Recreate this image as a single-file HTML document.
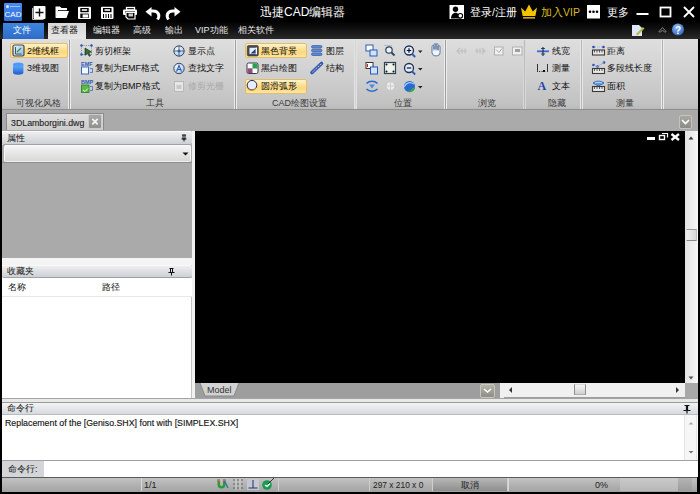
<!DOCTYPE html>
<html><head><meta charset="utf-8">
<style>
*{margin:0;padding:0;box-sizing:border-box}
html,body{width:700px;height:494px;overflow:hidden;background:#000;font-family:"Liberation Sans",sans-serif;font-size:11px;color:#222}
.a{position:absolute}
svg{position:absolute;overflow:visible}
.t{position:absolute;white-space:nowrap;line-height:12px}
.lat{-webkit-text-stroke:0.15px #222}
#title{left:0;top:0;width:700px;height:22px;background:#000}
#menu{left:0;top:22px;width:700px;height:17px;background:linear-gradient(#030303,#0c0c0c 30%,#2a2a2a)}
#ribbon{left:2px;top:39px;width:696px;height:71px;background:linear-gradient(#dedede,#d0d0d0 50%,#c2c2c2 92%,#b8b8b8)}
#tabstrip{left:2px;top:109px;width:696px;height:22px;background:#aaaaaa;border-top:1px solid #8e8e8e}
#left{left:2px;top:131px;width:190px;height:267px;background:#fff;border-right:1px solid #c4c4c4}
#split{left:192px;top:131px;width:3px;height:267px;background:#f2f2f2}
#draw{left:195px;top:131px;width:490px;height:252px;background:#000}
#vscroll{left:685px;top:131px;width:13px;height:252px;background:linear-gradient(90deg,#e4e4e4,#f6f6f6)}
#modelbar{left:195px;top:383px;width:490px;height:15px;background:#9e9e9e}
#corner{left:685px;top:383px;width:13px;height:15px;background:#a8a8a8}
#gap{left:2px;top:398px;width:696px;height:4px;background:#e6e9e6;border-top:1px solid #a4a4a4}
#cmdhdr{left:2px;top:402px;width:696px;height:13px;background:linear-gradient(#f2f3f4,#d6d9de);border-top:1px solid #9a9a9a;border-bottom:1px solid #b8bcc2}
#cmdtext{left:2px;top:415px;width:696px;height:46px;background:#fff;border-bottom:1px solid #a0a0a0}
#cmdin{left:2px;top:461px;width:696px;height:16px;background:#fff}
#status{left:2px;top:477px;width:695px;height:15px;background:linear-gradient(#c2c2c2,#a2a2a2);border-top:1px solid #5a5a5a}
.sep{position:absolute;top:40px;width:3px;height:69px;border-left:1px solid #ececec;border-right:1px solid #ececec;background:#9e9e9e}
.lbl{position:absolute;top:97px;font-size:9px;color:#3a3a3a;line-height:12px;white-space:nowrap}
.rb{position:absolute;font-size:9px;color:#111;line-height:12px;white-space:nowrap}
.hl{position:absolute;background:linear-gradient(#fff3c8,#fdd77a 60%,#fbe6a8);border:1px solid #e3bd6a;border-radius:2px}
.mn{position:absolute;top:24px;font-size:9px;color:#e8e8e8;line-height:12px;white-space:nowrap}
.hdr{position:absolute;background:linear-gradient(#eeeeef,#cdd0d5);border-top:1px solid #f8f8f8;border-bottom:1px solid #9ea2a8;border-radius:2px}
.nocjk .cj{letter-spacing:0.22em;-webkit-text-stroke:0.35px currentColor}
</style></head><body>
<div class="a" id="title"></div>
<div class="a" id="menu"></div>
<div class="a" id="ribbon"></div>
<div class="a" id="tabstrip"></div>
<div class="a" id="left"></div>
<div class="a" id="split"></div>
<div class="a" id="draw"></div>
<div class="a" id="vscroll"></div>
<div class="a" id="modelbar"></div>
<div class="a" id="corner"></div>
<div class="a" id="gap"></div>
<div class="a" id="cmdhdr"></div>
<div class="a" id="cmdtext"></div>
<div class="a" id="cmdin"></div>
<div class="a" id="status"></div>

<!-- ===== TITLE BAR ===== -->
<div class="a" style="left:4px;top:3px;width:18px;height:18px;background:linear-gradient(#4a8cf0,#3270d8);border-radius:1px"></div>
<div class="t" style="left:4px;top:10px;width:18px;text-align:center;font-size:8px;line-height:9px;color:#fff">CAD</div>
<div class="a" style="left:6px;top:5px;width:3px;height:3px;border-radius:50%;background:#dce8ff"></div>
<div class="a" style="left:10px;top:6px;width:10px;height:1px;background:#9cc0f8"></div>

<svg style="left:0;top:0" width="700" height="22">
 <!-- new -->
 <path d="M32.5 8v11.5h11" fill="none" stroke="#bbb" stroke-width="1"/>
 <rect x="33.5" y="6" width="12" height="13" rx="1" fill="#fff"/>
 <path d="M39.5 8.5v8M35.5 12.5h8" stroke="#111" stroke-width="1.4"/>
 <!-- open -->
 <path d="M55.5 6.5h4.5l1.5 1.5h5.5v3H58.5l-3 6.5z" fill="#fff"/>
 <path d="M57.5 11h11.5l-2.5 7H55.5z" fill="#fff"/>
 <path d="M58 10.5h9" stroke="#000" stroke-width="0.8"/>
 <!-- save -->
 <rect x="78" y="6.8" width="13" height="12.2" rx="1" fill="#fff"/>
 <rect x="80.3" y="8" width="8.4" height="4.2" fill="#000"/>
 <rect x="81.8" y="9.2" width="5.4" height="1.6" fill="#fff"/>
 <rect x="80.3" y="13.6" width="8.4" height="4.4" fill="#000"/>
 <rect x="82.6" y="14.4" width="5.4" height="3.2" fill="#fff"/>
 <!-- save as -->
 <rect x="101" y="6.8" width="12.5" height="12.2" rx="1" fill="#fff"/>
 <rect x="103" y="8" width="8.5" height="4.2" fill="#000"/>
 <rect x="104.5" y="9.2" width="5.5" height="1.6" fill="#fff"/>
 <path d="M103.5 14v4M106 14v4M108.5 14v4M111 14v4" stroke="#000" stroke-width="1"/>
 <!-- print -->
 <rect x="126.5" y="7.5" width="8" height="2.5" fill="none" stroke="#fff" stroke-width="1.3"/>
 <rect x="123" y="9.5" width="14" height="5.5" rx="1" fill="#fff"/>
 <rect x="125" y="11.5" width="10" height="2" fill="#000"/>
 <path d="M126 12.5h9v6.5h-7l-2-2z" fill="#000" stroke="#fff" stroke-width="1.2"/>
 <rect x="128.5" y="13.5" width="4.5" height="3" fill="#ccc"/>
 <!-- undo -->
 <path d="M157.5 19.5c2.5-3.5 1.5-8.5-4.5-8.5h-2" fill="none" stroke="#fff" stroke-width="3"/>
 <path d="M145.5 11.8l6-4.8v9.6z" fill="#fff"/>
 <!-- redo -->
 <path d="M168.5 19.5c-2.5-3.5-1.5-8.5 4.5-8.5h2" fill="none" stroke="#fff" stroke-width="3"/>
 <path d="M180.5 11.8l-6-4.8v9.6z" fill="#fff"/>
 <!-- user -->
 <rect x="449.5" y="5" width="14.5" height="14" fill="#fff"/>
 <circle cx="455.5" cy="9.3" r="2.7" fill="#000"/>
 <path d="M451 18.5c0-3.5 2-5.8 4.5-5.8s4.5 2.3 4.5 5.8z" fill="#000"/>
 <circle cx="460.3" cy="15.8" r="2.3" fill="#fff" stroke="#000" stroke-width="1.1"/>
 <!-- crown -->
 <path d="M521 7.5l4.2 4 3.8-7 3.8 7 4.2-4-1.6 8.5h-12.8z" fill="#f3c300"/>
 <rect x="523" y="17" width="12" height="1.6" fill="#d4a600"/>
 <!-- more -->
 <rect x="587" y="5" width="13" height="13.5" fill="#fff"/>
 <circle cx="590" cy="11.8" r="1.3" fill="#000"/><circle cx="593.5" cy="11.8" r="1.3" fill="#000"/><circle cx="597" cy="11.8" r="1.3" fill="#000"/>
 <!-- min max close -->
 <rect x="636.5" y="13" width="12" height="2" fill="#fff"/>
 <rect x="660.5" y="7.5" width="10" height="9" fill="none" stroke="#fff" stroke-width="1.8"/>
 <path d="M684 7l10 10M694 7l-10 10" stroke="#fff" stroke-width="1.8"/>
</svg>
<div class="t" style="left:260px;top:5px;font-size:12px;line-height:15px;color:#fff">迅捷CAD编辑器</div>
<div class="t" style="left:470px;top:6px;font-size:10.5px;color:#fff">登录/注册</div>
<div class="t" style="left:541px;top:6px;font-size:10.5px;color:#d9bc22">加入VIP</div>
<div class="t" style="left:607px;top:6px;font-size:10.5px;color:#fff">更多</div>

<!-- ===== MENU ROW ===== -->
<div class="a" style="left:3px;top:23px;width:41px;height:16px;background:linear-gradient(#3e86e0,#2d6cc8)"></div>
<div class="mn" style="left:13px;top:24px;color:#fff">文件</div>
<div class="a" style="left:48px;top:23px;width:38px;height:16px;background:linear-gradient(#d8d8d8,#e6e6e6)"></div>
<div class="mn" style="left:51px;color:#111">查看器</div>
<div class="mn" style="left:93px">编辑器</div>
<div class="mn" style="left:133px">高级</div>
<div class="mn" style="left:165px">输出</div>
<div class="mn" style="left:195px">VIP功能</div>
<div class="mn" style="left:238px">相关软件</div>
<svg style="left:0;top:22px" width="700" height="17">
 <path d="M632 3h7l3 3v8h-10z" fill="#dfe8f5"/>
 <path d="M636 12l7-7 1.5 1.5-7 7z" fill="#b8b84a"/>
 <path d="M659 9.5l3.5-4 3.5 4v0.5h-1.6l-1.9-2-1.9 2h-1.6z" fill="none" stroke="#8c8c8c" stroke-width="0.9"/>
 <defs><radialGradient id="qg" cx="0.4" cy="0.3" r="0.8"><stop offset="0" stop-color="#8ab8f0"/><stop offset="1" stop-color="#2a62c0"/></radialGradient></defs>
 <circle cx="678" cy="7.5" r="6" fill="url(#qg)"/>
 <text x="678" y="11.5" font-size="10" font-weight="bold" fill="#fff" text-anchor="middle" font-family="Liberation Sans">?</text>
</svg>

<!-- ===== RIBBON ===== -->
<div class="sep" style="left:68px"></div>
<div class="sep" style="left:234px"></div>
<div class="sep" style="left:354px;background:#d4d4d4;border-color:#e2e2e2"></div>
<div class="sep" style="left:444px"></div>
<div class="sep" style="left:523px;background:#bcbcbc;border-color:#d8d8d8"></div>
<div class="sep" style="left:580px;background:#b8b8b8;border-color:#e6e6e6"></div>
<div class="sep" style="left:661px;background:#b0b0b0"></div>

<!-- group 1 -->
<div class="hl" style="left:10px;top:43px;width:58px;height:15px"></div>
<div class="rb" style="left:27px;top:45px">2维线框</div>
<div class="rb" style="left:27px;top:62px">3维视图</div>
<div class="lbl" style="left:16px">可视化风格</div>
<!-- group 2 -->
<div class="rb" style="left:95px;top:45px">剪切框架</div>
<div class="rb" style="left:95px;top:62px">复制为EMF格式</div>
<div class="rb" style="left:95px;top:79.5px">复制为BMP格式</div>
<div class="rb" style="left:188px;top:45px">显示点</div>
<div class="rb" style="left:188px;top:62px">查找文字</div>
<div class="rb" style="left:188px;top:79.5px;color:#aaa">修剪光栅</div>
<div class="lbl" style="left:146px">工具</div>
<!-- group 3 -->
<div class="hl" style="left:245px;top:43px;width:62px;height:15px"></div>
<div class="hl" style="left:245px;top:79px;width:62px;height:15px"></div>
<div class="rb" style="left:261px;top:45px">黑色背景</div>
<div class="rb" style="left:261px;top:62px">黑白绘图</div>
<div class="rb" style="left:261px;top:79.5px">圆滑弧形</div>
<div class="rb" style="left:326px;top:45px">图层</div>
<div class="rb" style="left:326px;top:62px">结构</div>
<div class="lbl" style="left:272px">CAD绘图设置</div>
<!-- group 4 -->
<div class="lbl" style="left:394px">位置</div>
<div class="lbl" style="left:478px">浏览</div>
<div class="rb" style="left:552px;top:45px">线宽</div>
<div class="rb" style="left:552px;top:62px">测量</div>
<div class="rb" style="left:552px;top:79.5px">文本</div>
<div class="lbl" style="left:548px">隐藏</div>
<div class="rb" style="left:607px;top:45px">距离</div>
<div class="rb" style="left:607px;top:62px">多段线长度</div>
<div class="rb" style="left:607px;top:79.5px">面积</div>
<div class="lbl" style="left:616px">测量</div>

<svg style="left:0;top:0" width="700" height="110">
 <defs>
  <linearGradient id="gb" x1="0" y1="0" x2="0" y2="1"><stop offset="0" stop-color="#6ab4ff"/><stop offset="1" stop-color="#1a5cd0"/></linearGradient>
  <linearGradient id="lb" x1="0" y1="0" x2="1" y2="1"><stop offset="0" stop-color="#e8f4ff"/><stop offset="1" stop-color="#8ab8e0"/></linearGradient>
  <radialGradient id="rc" cx="0.4" cy="0.35" r="0.7"><stop offset="0" stop-color="#ffffff"/><stop offset="1" stop-color="#a8c4e8"/></radialGradient>
 </defs>
 <!-- G1 2D -->
 <rect x="13" y="45" width="11" height="11" rx="1.5" fill="url(#lb)" stroke="#444a52" stroke-width="1.2"/>
 <path d="M15.5 47v7h6" fill="none" stroke="#555" stroke-width="1"/>
 <path d="M17 52l4-4" stroke="#3a8a50" stroke-width="1.2"/>
 <!-- G1 3D -->
 <path d="M13 64.5v8c0 1.5 2.3 2.2 5.2 2.2s5.2-0.7 5.2-2.2v-8z" fill="url(#gb)"/>
 <ellipse cx="18.2" cy="64.5" rx="5.2" ry="2" fill="#4a9cf8"/>
 <!-- G2 cut frame -->
 <path d="M81 45.5h11M81 54.5h11M81.5 45v10M91.5 45v10" stroke="#6a7a90" stroke-width="0.8" stroke-dasharray="1.2 1.2"/>
 <circle cx="81.5" cy="45.5" r="1.2" fill="#2050b0"/><circle cx="91.5" cy="45.5" r="1.2" fill="#2050b0"/><circle cx="81.5" cy="54.5" r="1.2" fill="#2050b0"/>
 <path d="M85 48l6.5 4-3 0.6 2 3-1.2 0.7-2-3-2.3 2z" fill="#2a7a30" stroke="#111" stroke-width="0.6"/>
 <!-- EMF -->
 <text x="81" y="66" font-size="5.5" font-weight="bold" fill="#2a5ab8" font-family="Liberation Sans">EMF</text>
 <rect x="81.5" y="67" width="7" height="7" fill="#f4f8ff" stroke="#3a6ac0" stroke-width="1"/>
 <path d="M90 68.5h2.5v4h-2.5" fill="none" stroke="#3a6ac0" stroke-width="0.8"/>
 <!-- BMP -->
 <text x="81" y="84" font-size="5.5" font-weight="bold" fill="#2a5ab8" font-family="Liberation Sans">BMP</text>
 <rect x="81.5" y="85" width="7.5" height="7.5" fill="#5cb84a" stroke="#3a8a30" stroke-width="1"/>
 <path d="M83 90l2 1.5 3-3" stroke="#e8ffe0" stroke-width="1" fill="none"/>
 <path d="M90 86.5h2.5v4h-2.5" fill="none" stroke="#3a6ac0" stroke-width="0.8"/>
 <!-- show points -->
 <circle cx="179" cy="51" r="5.2" fill="url(#rc)" stroke="#3a4a60" stroke-width="1"/>
 <path d="M179 46v10M174 51h10" stroke="#3a4a60" stroke-width="0.8"/>
 <circle cx="179" cy="51" r="1.5" fill="#2a5ab8"/>
 <!-- find text -->
 <circle cx="179" cy="68.5" r="5.2" fill="url(#rc)" stroke="#3a4a60" stroke-width="1"/>
 <path d="M176.5 71.5l2.5-6 2.5 6M177.5 69.5h3" stroke="#2a5ab8" stroke-width="1.1" fill="none"/>
 <!-- trim raster (disabled) -->
 <rect x="174.5" y="81.5" width="9" height="10" fill="#e6e6e6" stroke="#b8b8b8" stroke-width="1"/>
 <rect x="176.5" y="85" width="5" height="4" fill="#c8c8c8"/>
 <!-- G3 black bg -->
 <rect x="247.3" y="45.5" width="11" height="10.5" rx="1.2" fill="#474c56" stroke="#2a2e36" stroke-width="0.6"/>
 <rect x="249.5" y="47.8" width="6.8" height="6.2" fill="#e4eefa"/>
 <path d="M250.5 53.5l5.3-4.8v4.8z" fill="#22407a"/>
 <rect x="255.8" y="47.5" width="1.2" height="6.8" fill="#f4faff"/>
 <!-- bw -->
 <rect x="247" y="63" width="11" height="10.5" rx="1.5" fill="#fff" stroke="#333a48" stroke-width="1"/>
 <rect x="252.5" y="63.5" width="5" height="5" fill="#2aa050"/>
 <rect x="247.5" y="68.3" width="5" height="4.7" fill="#9a4a7a"/>
 <!-- smooth arc -->
 <circle cx="252" cy="85.2" r="4.8" fill="#e4eeff" stroke="#2a3040" stroke-width="1"/>
 <path d="M247.5 88.5c2 2.5 6 2.5 8.5 0" stroke="#d8a020" stroke-width="1" fill="none"/>
 <!-- layers -->
 <rect x="311.5" y="45.5" width="10.5" height="2.6" rx="1.3" fill="#5a8ad8" stroke="#2a4a90" stroke-width="0.6"/>
 <rect x="311.5" y="49.2" width="10.5" height="2.6" rx="1.3" fill="#5a8ad8" stroke="#2a4a90" stroke-width="0.6"/>
 <rect x="311.5" y="52.9" width="10.5" height="2.6" rx="1.3" fill="#5a8ad8" stroke="#2a4a90" stroke-width="0.6"/>
 <!-- structure -->
 <path d="M312 72.5l9.5-9" stroke="#3a5ab0" stroke-width="3.6" stroke-linecap="round"/>
 <path d="M312.5 72l9-8.5" stroke="#d0e0ff" stroke-width="1" stroke-dasharray="1.5 1"/>
 <!-- G4 row1 -->
 <rect x="366" y="45" width="7" height="6" fill="#fff" stroke="#2a5ab8" stroke-width="1"/>
 <rect x="370" y="50" width="7" height="6" fill="#cfe2ff" stroke="#2a5ab8" stroke-width="1"/>
 <circle cx="389" cy="50" r="3.2" fill="#e8f2ff" stroke="#304060" stroke-width="1.2"/>
 <path d="M391.5 52.5l3 3" stroke="#304060" stroke-width="1.8"/>
 <path d="M384.5 45.5h8" stroke="#888" stroke-width="0.8" stroke-dasharray="1 1"/>
 <circle cx="409" cy="50.5" r="4.5" fill="#e0ecff" stroke="#203050" stroke-width="1.3"/>
 <path d="M406.8 50.5h4.4M409 48.3v4.4" stroke="#111" stroke-width="1.2"/>
 <path d="M412.2 54l3 3" stroke="#2a5ab8" stroke-width="1.8"/>
 <path d="M418 50.5h4.5l-2.25 2.5z" fill="#222"/>
 <path d="M432 51.5v-5a1 1 0 0 1 2 0v3v-4.8a1 1 0 0 1 2 0v4.8v-4.8a1 1 0 0 1 2 0v5.3v-3.3a1 1 0 0 1 2 0v5.8c0 2.3-1.5 3.3-3.5 3.3h-1.5c-1.5 0-2.2-1-3-3z" fill="#f2f7ff" stroke="#3e5a88" stroke-width="0.8"/>
 <path d="M434 49.5v1.5M436 49.5v1.5M438 50v1" stroke="#8aa0c8" stroke-width="0.6"/>
 <!-- row2 -->
 <rect x="366" y="62.5" width="7" height="6" fill="#fff" stroke="#333" stroke-width="1"/>
 <path d="M367.5 64v3" stroke="#d02020" stroke-width="1"/>
 <rect x="370.5" y="67" width="7" height="7" fill="#cfe2ff" stroke="#2a5ab8" stroke-width="1"/>
 <rect x="384.5" y="62.5" width="11" height="11" fill="#eef2ea" stroke="#304058" stroke-width="1.2"/>
 <circle cx="386.5" cy="64.5" r="1" fill="#111"/><circle cx="393.5" cy="64.5" r="1" fill="#111"/><circle cx="386.5" cy="71.5" r="1" fill="#111"/><circle cx="393.5" cy="71.5" r="1" fill="#111"/>
 <circle cx="409" cy="68" r="4.5" fill="#e0ecff" stroke="#203050" stroke-width="1.3"/>
 <path d="M406.8 68h4.4" stroke="#111" stroke-width="1.2"/>
 <path d="M412.2 71.5l3 3" stroke="#2a5ab8" stroke-width="1.8"/>
 <path d="M418 68h4.5l-2.25 2.5z" fill="#222"/>
 <!-- row3 -->
 <path d="M366.5 83.5c3-3 8-3 11 0M366.5 89c3 3 8 3 11 0" stroke="#2a6ad0" stroke-width="1.6" fill="none"/>
 <path d="M369 84.5h6l-3 4z" fill="#4a8ae8"/>
 <circle cx="390.5" cy="86" r="4.5" fill="#ececec" stroke="#c4c4c4" stroke-width="1"/>
 <path d="M390.5 82v8M386.5 86h8" stroke="#c8c8c8" stroke-width="0.8"/>
 <circle cx="409.5" cy="86.5" r="5.5" fill="#2a6ad0"/>
 <path d="M404 87c2-4 6-6 10-3" stroke="#a0d0ff" stroke-width="1.2" fill="none"/>
 <path d="M408 92a5.5 5.5 0 0 0 7-4l-2 0z" fill="#3aa840"/>
 <path d="M418 86h4.5l-2.25 2.5z" fill="#222"/>
 <!-- G5 browse (disabled) -->
 <path d="M457 51h10M460 48l-3 3 3 3M462 48.5v5M465 48.5v5" stroke="#c0c0c0" stroke-width="1.2" fill="none"/>
 <path d="M475 51h10M482 48l3 3-3 3M477 48.5v5M480 48.5v5" stroke="#c0c0c0" stroke-width="1.2" fill="none"/>
 <rect x="494.5" y="47" width="8.5" height="8" fill="#f0f0f0" stroke="#b0b0b0" stroke-width="1"/>
 <path d="M496 49.5l3 3 3-4" stroke="#a8a8a8" stroke-width="1" fill="none"/>
 <rect x="512.5" y="47" width="9.5" height="8" fill="#f0f0f0" stroke="#b0b0b0" stroke-width="1"/>
 <path d="M515 49h5v3h-5z" fill="#a0a0a0"/>
 <!-- G6 hide -->
 <path d="M537 51.3h12" stroke="#3a6ad0" stroke-width="1.8"/>
 <path d="M543 47v9" stroke="#1a2a50" stroke-width="1.1"/>
 <path d="M541 48.5h4M541 54h4" stroke="#1a2a50" stroke-width="0.8"/>
 <path d="M537.5 64v8M547.5 64v8" stroke="#333" stroke-width="1"/>
 <path d="M539 71.5h7" stroke="#333" stroke-width="1" stroke-dasharray="1.2 1.3"/>
 <rect x="543" y="70" width="2" height="2" fill="#111"/>
 <text x="537.5" y="90" font-size="12" font-weight="bold" fill="#1e44a8" font-family="Liberation Serif">A</text>
 <!-- G7 measure -->
 <circle cx="593.5" cy="47" r="1.3" fill="#2a4ab0"/><circle cx="603.5" cy="47" r="1.3" fill="#2a4ab0"/>
 <path d="M595 47h7" stroke="#8aa8e0" stroke-width="0.8" stroke-dasharray="1 1"/>
 <rect x="592.5" y="50" width="12" height="5" fill="#e8e8e8" stroke="#3a3a3a" stroke-width="1.1"/>
 <path d="M594.5 50v2.5M597 50v2.5M599.5 50v2.5M602 50v2.5" stroke="#333" stroke-width="0.8"/>
 <circle cx="593.5" cy="65" r="1.3" fill="#2a4ab0"/><circle cx="597.5" cy="66.5" r="1.3" fill="#2a4ab0"/><circle cx="604" cy="62.5" r="1.3" fill="#2a4ab0"/>
 <path d="M593.5 65l4 1.5 6.5-4" stroke="#8aa8e0" stroke-width="0.8" fill="none"/>
 <rect x="592.5" y="68.5" width="12" height="5" fill="#e8e8e8" stroke="#3a3a3a" stroke-width="1.1"/>
 <path d="M594.5 68.5v2.5M597 68.5v2.5M599.5 68.5v2.5M602 68.5v2.5" stroke="#333" stroke-width="0.8"/>
 <path d="M593 83c3-2.5 8-2.5 11 0l-5.5 3z" fill="#5a98e8" stroke="#2a5ab8" stroke-width="0.8"/>
 <path d="M595 83c2-1 5-1 7 0" stroke="#e8f4ff" stroke-width="0.8" fill="none"/>
 <rect x="592.5" y="86.5" width="12" height="5" fill="#e8e8e8" stroke="#3a3a3a" stroke-width="1.1"/>
 <path d="M594.5 86.5v2.5M597 86.5v2.5M599.5 86.5v2.5M602 86.5v2.5" stroke="#333" stroke-width="0.8"/>
</svg>

<!-- ===== TAB STRIP ===== -->
<div class="a" style="left:6px;top:113px;width:98px;height:17px;background:linear-gradient(#dedede,#cccccc);border:1px solid #8a8a8a;border-bottom:none;border-radius:1px 1px 0 0"></div>
<div class="t" style="left:11px;top:117px;font-size:8.8px;color:#222;-webkit-text-stroke:0.15px #333">3DLamborgini.dwg</div>
<div class="a" style="left:88px;top:114px;width:14px;height:15px;background:linear-gradient(#a8a8a8,#909090);border:1px solid #cacaca;border-radius:2px"></div>
<svg style="left:0;top:0" width="700" height="131">
 <path d="M92.3 118.8l5.4 5.6M97.7 118.8l-5.4 5.6" stroke="#f4f4ec" stroke-width="1.8"/>
</svg>
<div class="a" style="left:679px;top:115px;width:13px;height:14px;background:linear-gradient(#a8a8a0,#8c8c84);border:1px solid #c4c4bc;border-radius:2px"></div>
<svg style="left:0;top:0" width="700" height="131">
 <path d="M682 120l3.5 3.5 3.5-3.5" stroke="#fff" stroke-width="1.6" fill="none"/>
</svg>

<!-- ===== LEFT PANEL ===== -->
<div class="hdr" style="left:2px;top:131px;width:190px;height:14px"></div>
<div class="rb" style="left:7px;top:132px">属性</div>
<div class="a" style="left:2px;top:145px;width:190px;height:113px;background:#aaaaaa"></div>
<div class="a" style="left:4px;top:145px;width:187px;height:17px;background:linear-gradient(#f4f4f4,#d8d8d8);border:1px solid #fafafa;border-bottom:1px solid #f0f0f0;border-radius:2px"></div>
<div class="a" style="left:2px;top:162px;width:190px;height:1px;background:#8e8e8e"></div>
<div class="a" style="left:2px;top:258px;width:190px;height:7px;background:#f4f4f4"></div>
<div class="hdr" style="left:2px;top:265px;width:190px;height:13px"></div>
<div class="rb" style="left:7px;top:265px">收藏夹</div>
<div class="a" style="left:2px;top:278px;width:190px;height:19px;background:#fff;border-bottom:1px solid #e8e8e8"></div>
<div class="rb" style="left:8px;top:281px">名称</div>
<div class="rb" style="left:102px;top:281px">路径</div>
<svg style="left:0;top:0" width="200" height="300">
 <path d="M182.5 152.5l3 3 3-3z" fill="#111"/>
 <path d="M182 135h4M183 135v4h2v-4M181.5 139h5M184 139v2.5" stroke="#111" stroke-width="1" fill="none"/>
 <path d="M169.5 268.5h4M170.5 268.5v4h2v-4M168.5 272.5h6M171.5 272.5v3" stroke="#111" stroke-width="1" fill="none"/>
</svg>

<!-- ===== DRAW AREA ===== -->
<svg style="left:0;top:0" width="700" height="400">
 <rect x="647" y="137" width="8" height="3" fill="#fff"/>
 <rect x="659.5" y="135.5" width="5" height="4" fill="none" stroke="#fff" stroke-width="1.4"/>
 <path d="M662 133.5h5.5v4" fill="none" stroke="#fff" stroke-width="1.2"/>
 <path d="M671.5 134l7.5 6M679 134l-7.5 6" stroke="#fff" stroke-width="2.4"/>
 <path d="M688.5 139.5l2.5-3 2.5 3z" fill="#333"/>
 <path d="M688.5 376.5l2.5 3 2.5-3z" fill="#555"/>
</svg>
<!-- vscroll thumb -->
<div class="a" style="left:686px;top:229px;width:11px;height:12px;background:linear-gradient(90deg,#f0f0f0,#d8d8d8);border-top:1px solid #9a9a9a;border-bottom:1px solid #8a8a8a;border-left:1px solid #e8e8e8;border-right:1px solid #c0c0c0"></div>

<!-- model bar -->
<svg style="left:0;top:0" width="700" height="400">
 <path d="M200 383h39l-5 13h-29z" fill="#d2d2d2"/>
 <path d="M200 383l5 13h29l5-13" fill="none" stroke="#888" stroke-width="1"/>
</svg>
<div class="t" style="left:207px;top:384px;font-size:9px;color:#333">Model</div>
<div class="a" style="left:480px;top:384px;width:15px;height:14px;background:linear-gradient(#b4b4aa,#8e8e86);border:1px solid #c8c8c0;border-radius:2px"></div>
<svg style="left:0;top:0" width="700" height="400">
 <path d="M484 389l3.5 3 3.5-3" stroke="#fff" stroke-width="1.5" fill="none"/>
</svg>
<div class="a" style="left:500px;top:383px;width:185px;height:15px;background:#f0f0f0"></div>
<div class="a" style="left:504px;top:397px;width:181px;height:1px;background:#9c9c9c"></div>
<div class="a" style="left:574px;top:384px;width:12px;height:11px;background:linear-gradient(#f4f4f4,#d0d0d0);border-left:1px solid #8e8e8e;border-right:1px solid #8e8e8e;border-top:1px solid #d8d8d8;border-bottom:1px solid #b0b0b0"></div>
<svg style="left:0;top:0" width="700" height="400">
 <path d="M512 387l-3 3 3 3z" fill="#333"/>
 <path d="M676 387l3 3-3 3z" fill="#333"/>
</svg>

<!-- ===== COMMAND ===== -->
<div class="rb" style="left:7px;top:402px">命令行</div>
<svg style="left:0;top:0" width="700" height="494">
 <path d="M684.5 405.5h5M686.5 405.5v5h1v-5M683.5 410.5h7M687 410.5v3" stroke="#111" stroke-width="1.2" fill="none"/>
</svg>
<div class="t lat" style="left:5px;top:417px;font-size:8.8px;color:#111">Replacement of the [Geniso.SHX] font with [SIMPLEX.SHX]</div>
<div class="a" style="left:684px;top:415px;width:13px;height:45px;background:#f6f6f6;border-left:1px solid #e4e4e4;border-right:1px solid #e4e4e4"></div>
<svg style="left:0;top:0" width="700" height="494">
 <path d="M688.5 424.5l2.5-2.5 2.5 2.5z" fill="#aaa"/>
 <path d="M688.5 451l2.5 2.5 2.5-2.5z" fill="#777"/>
</svg>
<div class="a" style="left:2px;top:461px;width:42px;height:16px;background:#d4d5d8"></div>
<div class="rb" style="left:8px;top:463px">命令行:</div>

<!-- ===== STATUS ===== -->
<div class="a" style="left:141px;top:478px;width:1px;height:13px;background:#d8d8d8"></div>
<div class="t" style="left:144px;top:479px;font-size:9px;color:#222">1/1</div>
<div class="a" style="left:278px;top:478px;width:1px;height:13px;background:#cfcfcf"></div>
<div class="a" style="left:369px;top:478px;width:1px;height:13px;background:#cfcfcf"></div>
<div class="t" style="left:373px;top:479px;font-size:8.4px;color:#222">297 x 210 x 0</div>
<div class="a" style="left:432px;top:478px;width:76px;height:13px;background:linear-gradient(#b8b8b8,#8e8e8e);border-left:1px solid #d0d0d0;border-right:1px solid #d0d0d0"></div>
<div class="t" style="left:461px;top:479px;font-size:9px;color:#222">取消</div>
<div class="a" style="left:508px;top:478px;width:1px;height:13px;background:#d8d8d8"></div>
<div class="a" style="left:620px;top:478px;width:58px;height:13px;background:linear-gradient(#cacaca,#b8b8b8)"></div>
<div class="a" style="left:678px;top:478px;width:14px;height:13px;background:linear-gradient(#b4b4b4,#9c9c9c)"></div>
<div class="t" style="left:595px;top:479px;font-size:9px;color:#222">0%</div>
<svg style="left:0;top:0" width="700" height="494">
 <path d="M217.5 479.5v5a4 4 0 0 0 8 0v-5h-2.5v5a1.5 1.5 0 0 1-3 0v-5z" fill="#2a9a3a"/>
 <rect x="217.5" y="479.5" width="2.5" height="2" fill="#e06060"/><rect x="223" y="479.5" width="2.5" height="2" fill="#e06060"/>
 <path d="M224.5 481l3.5 7" stroke="#2a7aa0" stroke-width="1.5"/>
 <g fill="#555"><circle cx="234" cy="480" r="0.8"/><circle cx="238" cy="480" r="0.8"/><circle cx="242" cy="480" r="0.8"/><circle cx="234" cy="484" r="0.8"/><circle cx="238" cy="484" r="0.8"/><circle cx="242" cy="484" r="0.8"/><circle cx="234" cy="488" r="0.8"/><circle cx="238" cy="488" r="0.8"/><circle cx="242" cy="488" r="0.8"/></g>
 <path d="M236 479v11M240 479v11" stroke="#d8d8d8" stroke-width="0.8"/>
 <rect x="247" y="479" width="12" height="11" fill="#c4c8d0"/>
 <path d="M248.5 488h9M253 480v8" stroke="#203070" stroke-width="1"/>
 <circle cx="267" cy="485" r="4.8" fill="#1a9a50"/>
 <path d="M265 485l2 1.5 3-3" stroke="#fff" stroke-width="1.3" fill="none"/>
 <path d="M268 484l6-6" stroke="#222" stroke-width="0.9"/>
</svg>
<script>
(function(){
 var t=document.createElement('span');
 t.style.cssText='position:absolute;left:0;top:0;font-size:20px;font-family:"Liberation Sans",sans-serif;white-space:nowrap;visibility:hidden';
 t.textContent='\u526a\u5207\u6846\u67b6';
 document.body.appendChild(t);
 var w=t.getBoundingClientRect().width; t.parentNode.removeChild(t);
 if(w>76) return;
 var ratio=80/w;
 document.body.className+=' nocjk';
 var re=/[\u3000-\u9fff\uff00-\uffef]+/g;
 var walker=document.createTreeWalker(document.body,NodeFilter.SHOW_TEXT,null,false);
 var nodes=[],n;
 while((n=walker.nextNode())){ if(n.parentNode.tagName!=='SCRIPT' && n.parentNode.tagName!=='STYLE' && re.test(n.nodeValue)) nodes.push(n); re.lastIndex=0; }
 nodes.forEach(function(node){
  var v=node.nodeValue, frag=document.createDocumentFragment(), last=0, m;
  re.lastIndex=0;
  while((m=re.exec(v))){
   if(m.index>last) frag.appendChild(document.createTextNode(v.slice(last,m.index)));
   var sp=document.createElement('span'); sp.className='cj'; sp.textContent=m[0]; frag.appendChild(sp);
   last=m.index+m[0].length;
  }
  if(last<v.length) frag.appendChild(document.createTextNode(v.slice(last)));
  node.parentNode.replaceChild(frag,node);
 });
})();
</script>
</body></html>
